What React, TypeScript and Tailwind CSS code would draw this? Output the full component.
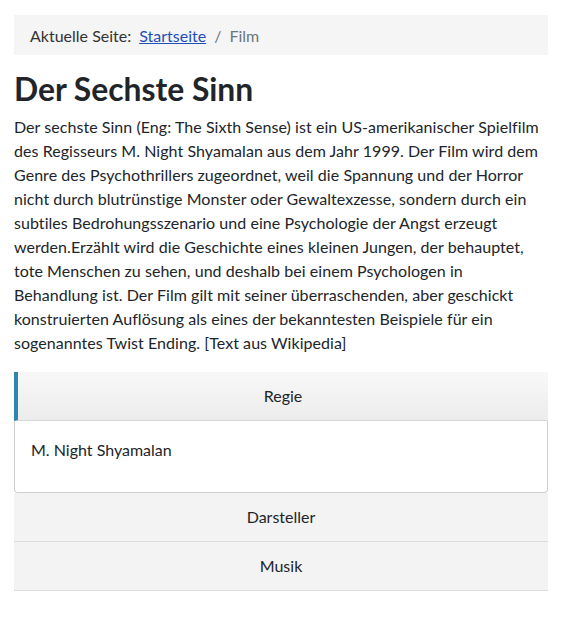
import React from "react";

const lines = [
  "Der sechste Sinn (Eng: The Sixth Sense) ist ein US-amerikanischer Spielfilm",
  "des Regisseurs M. Night Shyamalan aus dem Jahr 1999. Der Film wird dem",
  "Genre des Psychothrillers zugeordnet, weil die Spannung und der Horror",
  "nicht durch blutrünstige Monster oder Gewaltexzesse, sondern durch ein",
  "subtiles Bedrohungsszenario und eine Psychologie der Angst erzeugt",
  "werden.Erzählt wird die Geschichte eines kleinen Jungen, der behauptet,",
  "tote Menschen zu sehen, und deshalb bei einem Psychologen in",
  "Behandlung ist. Der Film gilt mit seiner überraschenden, aber geschickt",
  "konstruierten Auflösung als eines der bekanntesten Beispiele für ein",
  "sogenanntes Twist Ending. [Text aus Wikipedia]",
];

export default function App() {
  return (
    <div className="min-h-[642px] bg-white px-[14px] pt-[15px] text-[16px] leading-[24px] text-[#212529]" style={{ fontFamily: "Lato, 'Noto Sans', sans-serif" }}>
      <nav className="flex h-[40px] items-center bg-[#f5f5f5] px-[16px] pt-[2px] text-[#333]">
        <span>Aktuelle Seite:</span>
        <a href="#" className="ml-[8px] text-[#1f4fb8] underline">Startseite</a>
        <span className="px-[8px] text-[#6c757d]">/</span>
        <span className="text-[#6c757d]">Film</span>
      </nav>
      <h1 className="mt-[15px] text-[31.8px] font-bold leading-[38px] text-[#212529]">Der Sechste Sinn</h1>
      <p className="mt-[7px] tracking-[0.05px]">
        {lines.map((l, i) => (
          <span key={i} className="block whitespace-nowrap">{l}</span>
        ))}
      </p>
      <div className="mt-[17px]">
        <div className="flex h-[49px] items-center justify-center border-b border-[#d6d6d6] border-l-[4px] border-l-[#2e86b2] bg-gradient-to-b from-[#f8f8f8] to-[#ececec]">
          Regie
        </div>
        <div className="h-[72px] rounded-b-[4px] border border-t-0 border-[#cfcfcf] bg-white px-[16px] pt-[17px]">
          M. Night Shyamalan
        </div>
        <div className="flex h-[49px] items-center justify-center border-b border-[#dcdcdc] bg-[#f3f3f3]">
          Darsteller
        </div>
        <div className="flex h-[49px] items-center justify-center border-b border-[#dcdcdc] bg-[#f3f3f3]">
          Musik
        </div>
      </div>
    </div>
  );
}
